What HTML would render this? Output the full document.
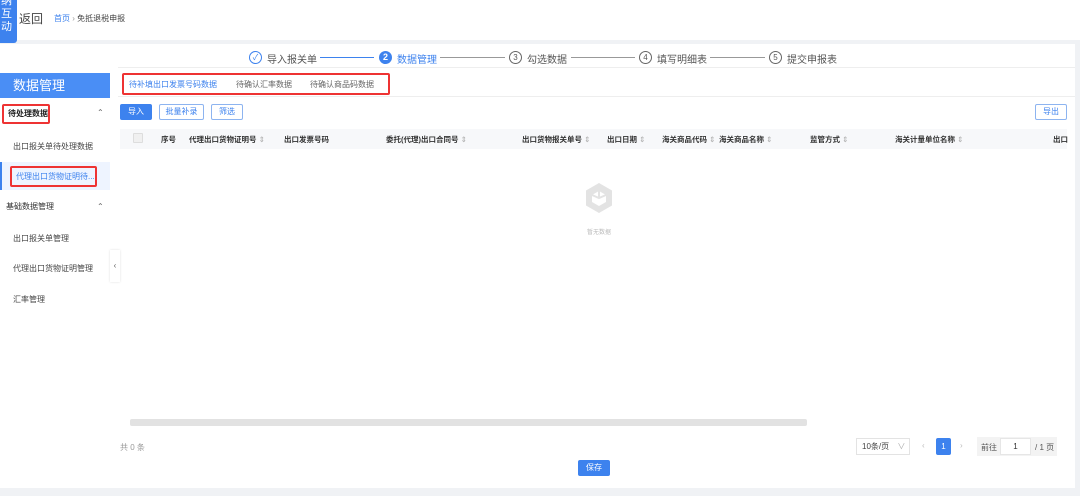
<!DOCTYPE html>
<html><head><meta charset="utf-8"><style>
*{margin:0;padding:0;box-sizing:border-box}
body{width:1080px;height:496px;background:#f0f2f5;font-family:"Liberation Sans","Noto Sans CJK SC",sans-serif;position:relative;overflow:hidden;color:#333}
.a{position:absolute;white-space:nowrap}
.f8{font-size:8px}
.th{font-size:7.5px;font-weight:bold;color:#333;top:134px}
.th span{color:#aaa;font-weight:normal}
.red{border:2px solid #e33;border-radius:2px}
</style></head><body>
<div class="a" style="left:0;top:0;width:1080px;height:40px;background:#fff"></div>
<div class="a" style="left:0;top:0;width:17px;height:43px;background:#3d82ee;border-radius:0 0 3px 0;color:#fff;font-size:11px;line-height:13px;padding-left:1px;overflow:hidden"><div style="margin-top:-5px">纳<br>互<br>动</div></div>
<div class="a" style="left:19px;top:10px;font-size:12px;color:#444">返回</div>
<div class="a f8" style="left:54px;top:13px;color:#3d82ee">首页 <span style="color:#999">›</span> <span style="color:#444">免抵退税申报</span></div>
<div class="a" style="left:0;top:44px;width:1075px;height:444px;background:#fff"></div>
<!-- steps -->
<div class="a" style="left:249px;top:51px;width:13px;height:13px;border:1px solid #3d82ee;border-radius:50%;color:#3d82ee;font-size:8px;text-align:center;line-height:11px">✓</div>
<div class="a" style="left:267px;top:51px;font-size:10px;color:#555">导入报关单</div>
<div class="a" style="left:320px;top:57px;width:54px;height:1px;background:#3d82ee"></div>
<div class="a" style="left:379px;top:51px;width:13px;height:13px;background:#3d82ee;border-radius:50%;color:#fff;font-size:9px;text-align:center;line-height:13px;font-weight:bold">2</div>
<div class="a" style="left:397px;top:51px;font-size:10px;color:#3d82ee">数据管理</div>
<div class="a" style="left:440px;top:57px;width:65px;height:1px;background:#999"></div>
<div class="a" style="left:509px;top:51px;width:13px;height:13px;border:1px solid #666;border-radius:50%;color:#555;font-size:8px;text-align:center;line-height:11px">3</div>
<div class="a" style="left:527px;top:51px;font-size:10px;color:#555">勾选数据</div>
<div class="a" style="left:571px;top:57px;width:64px;height:1px;background:#999"></div>
<div class="a" style="left:639px;top:51px;width:13px;height:13px;border:1px solid #666;border-radius:50%;color:#555;font-size:8px;text-align:center;line-height:11px">4</div>
<div class="a" style="left:657px;top:51px;font-size:10px;color:#555">填写明细表</div>
<div class="a" style="left:710px;top:57px;width:55px;height:1px;background:#999"></div>
<div class="a" style="left:769px;top:51px;width:13px;height:13px;border:1px solid #666;border-radius:50%;color:#555;font-size:8px;text-align:center;line-height:11px">5</div>
<div class="a" style="left:787px;top:51px;font-size:10px;color:#555">提交申报表</div>
<div class="a" style="left:118px;top:67px;width:957px;height:1px;background:#eee"></div>
<!-- sidebar -->
<div class="a" style="left:0;top:73px;width:110px;height:25px;background:#4a8ef5;color:#fff;font-size:13px;line-height:25px;padding-left:13px">数据管理</div>
<div class="a red f8" style="left:2px;top:104px;width:48px;height:20px;line-height:16px;padding-left:4px;font-weight:bold;color:#222">待处理数据</div>
<div class="a f8" style="left:97px;top:108px;color:#666">⌃</div>
<div class="a f8" style="left:13px;top:141px;color:#444">出口报关单待处理数据</div>
<div class="a" style="left:0;top:162px;width:110px;height:28px;background:#eef4ff;border-left:2px solid #3d82ee"></div>
<div class="a red f8" style="left:10px;top:166px;width:87px;height:21px;line-height:17px;padding-left:4px;color:#3d82ee">代理出口货物证明待...</div>
<div class="a f8" style="left:6px;top:201px;color:#333">基础数据管理</div>
<div class="a f8" style="left:97px;top:202px;color:#666">⌃</div>
<div class="a f8" style="left:13px;top:233px;color:#444">出口报关单管理</div>
<div class="a f8" style="left:13px;top:263px;color:#444">代理出口货物证明管理</div>
<div class="a f8" style="left:13px;top:294px;color:#444">汇率管理</div>
<div class="a" style="left:110px;top:250px;width:10px;height:32px;background:#fff;box-shadow:0 0 2px #ddd;font-size:8px;color:#666;text-align:center;line-height:32px">‹</div>
<!-- tabs -->
<div class="a red" style="left:122px;top:73px;width:268px;height:22px"></div>
<div class="a f8" style="left:129px;top:79px;color:#3d82ee">待补填出口发票号码数据</div>
<div class="a f8" style="left:236px;top:79px;color:#666">待确认汇率数据</div>
<div class="a f8" style="left:310px;top:79px;color:#666">待确认商品码数据</div>
<div class="a" style="left:118px;top:96px;width:957px;height:1px;background:#eee"></div>
<!-- buttons -->
<div class="a f8" style="left:120px;top:104px;width:32px;height:16px;background:#3d82ee;color:#fff;text-align:center;line-height:16px;border-radius:2px">导入</div>
<div class="a f8" style="left:159px;top:104px;width:45px;height:16px;border:1px solid #8db4f0;color:#3d82ee;text-align:center;line-height:14px;border-radius:2px">批量补录</div>
<div class="a f8" style="left:211px;top:104px;width:32px;height:16px;border:1px solid #8db4f0;color:#3d82ee;text-align:center;line-height:14px;border-radius:2px">筛选</div>
<div class="a f8" style="left:1035px;top:104px;width:32px;height:16px;border:1px solid #8db4f0;color:#3d82ee;text-align:center;line-height:14px;border-radius:2px">导出</div>
<!-- table header -->
<div class="a" style="left:120px;top:129px;width:947px;height:20px;background:#f7f8fa"></div>
<div class="a" style="left:133px;top:133px;width:10px;height:10px;border:1px solid #ddd;background:#f0f0f0;border-radius:1px"></div>
<div class="a th" style="left:161px">序号</div>
<div class="a th" style="left:189px">代理出口货物证明号 <span>⇕</span></div>
<div class="a th" style="left:284px">出口发票号码</div>
<div class="a th" style="left:386px">委托(代理)出口合同号 <span>⇕</span></div>
<div class="a th" style="left:522px">出口货物报关单号 <span>⇕</span></div>
<div class="a th" style="left:607px">出口日期 <span>⇕</span></div>
<div class="a th" style="left:662px">海关商品代码 <span>⇕</span></div>
<div class="a th" style="left:719px">海关商品名称 <span>⇕</span></div>
<div class="a th" style="left:810px">监管方式 <span>⇕</span></div>
<div class="a th" style="left:895px">海关计量单位名称 <span>⇕</span></div>
<div class="a th" style="left:1053px">出口</div>
<!-- empty -->
<svg class="a" style="left:585px;top:182px" width="28" height="32" viewBox="0 0 28 32"><path d="M14 1 L27 8.5 V23.5 L14 31 L1 23.5 V8.5 Z" fill="#e3e3e3"/><path d="M14 9 L21 13 V20 L14 24 L7 20 V13 Z" fill="#fff"/><path d="M14 9 V16 M7 13 L14 16 L21 13" stroke="#e3e3e3" stroke-width="2" fill="none"/></svg>
<div class="a" style="left:587px;top:227px;font-size:6px;color:#bbb">暂无数据</div>
<!-- scrollbar -->
<div class="a" style="left:130px;top:419px;width:677px;height:7px;background:#e2e2e2;border-radius:2px"></div>
<div class="a f8" style="left:120px;top:442px;color:#999">共 0 条</div>
<div class="a f8" style="left:856px;top:438px;width:54px;height:17px;border:1px solid #e3e3e3;color:#444;line-height:15px;padding-left:5px">10条/页 <span style="color:#aaa;margin-left:6px">∨</span></div>
<div class="a f8" style="left:922px;top:441px;color:#bbb">‹</div>
<div class="a f8" style="left:936px;top:438px;width:15px;height:17px;background:#3d82ee;color:#fff;text-align:center;line-height:17px;border-radius:2px">1</div>
<div class="a f8" style="left:960px;top:441px;color:#bbb">›</div>
<div class="a" style="left:977px;top:437px;width:80px;height:19px;background:#f3f3f3"></div>
<div class="a f8" style="left:981px;top:442px;color:#555">前往</div>
<div class="a f8" style="left:1000px;top:438px;width:31px;height:17px;background:#fff;border:1px solid #e6e6e6;text-align:center;line-height:15px">1</div>
<div class="a f8" style="left:1035px;top:442px;color:#555">/ 1 页</div>
<div class="a f8" style="left:578px;top:460px;width:32px;height:16px;background:#3d82ee;color:#fff;text-align:center;line-height:16px;border-radius:2px">保存</div>
</body></html>
